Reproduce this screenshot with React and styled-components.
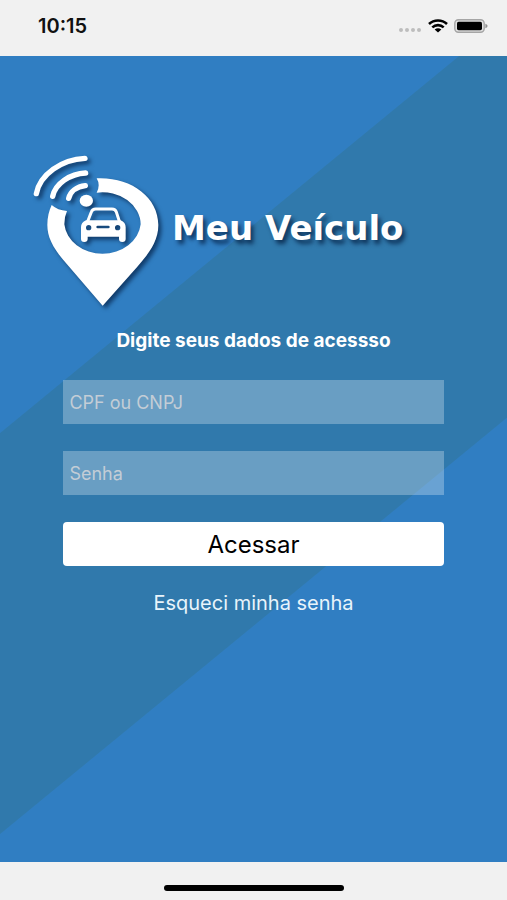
import React from "react";
import styled, { createGlobalStyle } from "styled-components";

const primaryColor = "#307ec2";
const secondaryColor = "#3079ac";
const barColor = "#f1f1f1";

const GlobalStyle = createGlobalStyle`
  * {
    box-sizing: border-box;
  }

  body {
    margin: 0;
    font-family: Inter, "Liberation Sans", sans-serif;
  }
`;

const PageStyled = styled.div`
  min-height: 100vh;
  display: flex;
  flex-direction: column;
  background: ${barColor};
`;

const StatusBarStyled = styled.header`
  display: flex;
  justify-content: space-between;
  align-items: center;
  height: 56px;
  padding: 0 19px 4px 38px;
`;

const ClockStyled = styled.time`
  font-size: 20px;
  font-weight: 600;
  color: #111;
`;

const StatusIconsStyled = styled.div`
  display: flex;
  align-items: center;
  gap: 6px;
`;

const MainStyled = styled.main`
  flex: 1;
  padding: 89px 0 40px;
  background: linear-gradient(
    140.6deg,
    ${primaryColor} 30.8%,
    ${secondaryColor} 30.9%,
    ${secondaryColor} 63.6%,
    ${primaryColor} 63.7%
  );
`;

const LogoStyled = styled.div`
  display: flex;
  align-items: center;
  gap: 2px;
  padding-left: 20px;
`;

const LogoNameStyled = styled.h1`
  margin: 0;
  padding-bottom: 5px;
  font-family: "DejaVu Sans", sans-serif;
  font-size: 34px;
  font-weight: 700;
  line-height: 40px;
  color: white;
  text-shadow: 3px 4px 4px rgba(0, 25, 60, 0.7);
`;

const LogoMarkStyled = styled.svg`
  flex: none;
  filter: drop-shadow(3px 3px 2px rgba(0, 25, 60, 0.65));
`;

const FormStyled = styled.form`
  display: flex;
  flex-direction: column;
  gap: 27px;
  width: 75%;
  margin: 0 auto;
`;

const TitleStyled = styled.h2`
  margin: 14px 0 27px;
  font-size: 19px;
  font-weight: 700;
  line-height: 24px;
  text-align: center;
  color: white;
`;

const InputStyled = styled.input`
  width: 100%;
  height: 44px;
  padding: 0 6px;
  border: 0;
  border-radius: 0;
  background: rgba(255, 255, 255, 0.28);
  font-family: inherit;
  font-size: 18px;
  color: white;

  &::placeholder {
    color: #c3cdd6;
    opacity: 1;
  }
`;

const ButtonStyled = styled.button`
  height: 44px;
  border: 0;
  border-radius: 4px;
  background: white;
  font-family: inherit;
  font-size: 24px;
  color: black;
`;

const LinkStyled = styled.a`
  align-self: center;
  font-size: 20px;
  line-height: 20px;
  color: #e8f4fb;
  text-decoration: none;
`;

const HomeBarStyled = styled.footer`
  display: flex;
  justify-content: center;
  align-items: center;
  height: 38px;
  padding-top: 14px;
`;

const HomeIndicatorStyled = styled.div`
  width: 180px;
  height: 6px;
  border-radius: 3px;
  background: black;
`;

const SignalIcon = () => (
  <svg width="24" height="14" viewBox="0 0 24 14" fill="#bdbdbd" aria-hidden="true">
    <circle cx="3" cy="11" r="2" />
    <circle cx="9" cy="11" r="2" />
    <circle cx="15" cy="11" r="2" />
    <circle cx="21" cy="11" r="2" />
  </svg>
);

const WifiIcon = () => (
  <svg width="20" height="14" viewBox="0 0 20 14" fill="none" stroke="black" strokeWidth="2.6" aria-hidden="true">
    <path d="M1 5C6 0.3 14 0.3 19 5" />
    <path d="M4.3 8.4C7.6 5.4 12.4 5.4 15.7 8.4" />
    <path d="M6.6 10.6Q10 7.8 13.4 10.6L10 13.6Z" fill="black" stroke="none" />
  </svg>
);

const BatteryIcon = () => (
  <svg width="34" height="14" viewBox="0 0 34 14" aria-hidden="true">
    <rect x="0.8" y="0.8" width="29.4" height="12.4" rx="3.6" fill="#e2e2e2" stroke="#a5a5a5" strokeWidth="1.4" />
    <rect x="3" y="2.8" width="25" height="8.4" rx="1.6" fill="black" />
    <path d="M31.4 4.8Q33.6 5.6 33.6 7T31.4 9.2Z" fill="#8f8f8f" />
  </svg>
);

const LogoMark = () => (
  <LogoMarkStyled width="150" height="170" viewBox="0 0 450 510" fill="white" aria-hidden="true">
    <path d="M230 100C330 95 415 155 415 240C415 288 387 325 352 365L248 482L130 345C97 305 82 275 82 240C82 218 87 197 95 180Q113 196 141 198Q133 215 133 238A115 97 0 0 0 362 238A115 97 0 0 0 230 143Q242 120 230 100Z" />
    <g fill="none" stroke="white" strokeWidth="16" strokeLinecap="round">
      <path d="M49 146C60 88 125 43 195 40" />
      <path d="M98 154C106 116 150 86 197 84" />
      <path d="M146 160C151 140 170 125 196 122" />
    </g>
    <ellipse cx="199" cy="167" rx="20" ry="18" />
    <path d="M202 232L214 201Q217 192 227 192H276Q286 192 289 201L299 232" fill="none" stroke="white" strokeWidth="9" />
    <path
      fillRule="evenodd"
      d="M198 226H302Q317 232 317 247V282Q317 291 307 291T297 282V275H203V282Q203 291 193 291T183 282V247Q183 232 198 226ZM206 240A8 8 0 1 0 206 256A8 8 0 1 0 206 240ZM293 240A8 8 0 1 0 293 256A8 8 0 1 0 293 240ZM233 242H265Q269 242 269 246T265 250H233Q229 250 229 246T233 242Z"
    />
  </LogoMarkStyled>
);

const App = () => {
  return (
    <PageStyled>
      <GlobalStyle />
      <StatusBarStyled>
        <ClockStyled>10:15</ClockStyled>
        <StatusIconsStyled>
          <SignalIcon />
          <WifiIcon />
          <BatteryIcon />
        </StatusIconsStyled>
      </StatusBarStyled>
      <MainStyled>
        <LogoStyled>
          <LogoMark />
          <LogoNameStyled>Meu Veículo</LogoNameStyled>
        </LogoStyled>
        <TitleStyled>Digite seus dados de acessso</TitleStyled>
        <FormStyled>
          <InputStyled type="text" name="documento" placeholder="CPF ou CNPJ" aria-label="CPF ou CNPJ" />
          <InputStyled type="password" name="senha" placeholder="Senha" aria-label="Senha" />
          <ButtonStyled type="button">Acessar</ButtonStyled>
          <LinkStyled href="#senha">Esqueci minha senha</LinkStyled>
        </FormStyled>
      </MainStyled>
      <HomeBarStyled>
        <HomeIndicatorStyled />
      </HomeBarStyled>
    </PageStyled>
  );
};

export default App;
